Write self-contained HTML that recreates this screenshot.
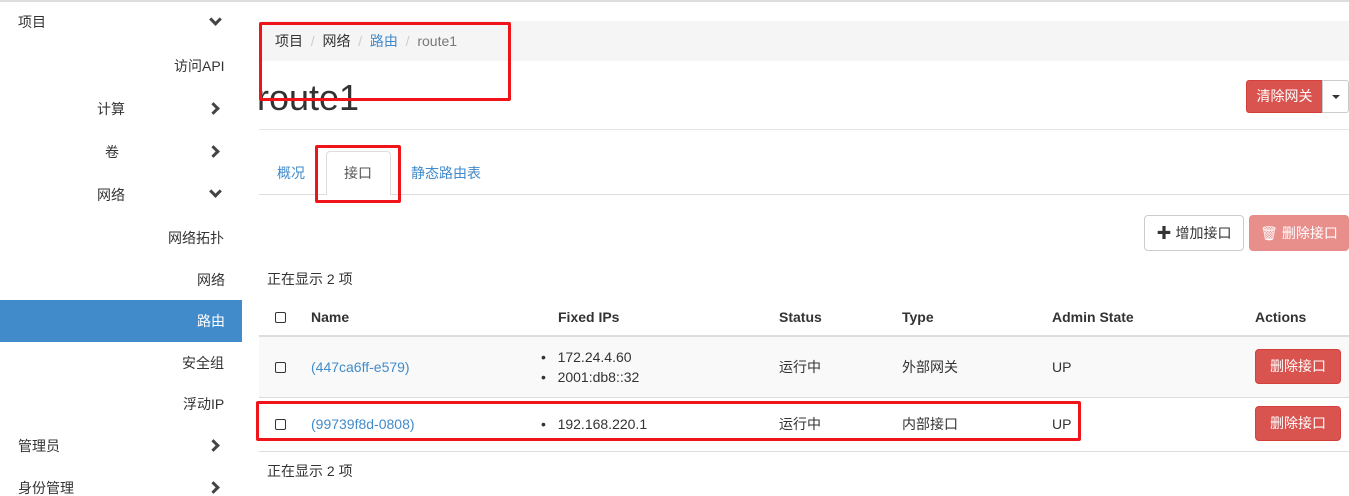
<!DOCTYPE html>
<html><head><meta charset="utf-8"><style>
*{box-sizing:border-box;margin:0;padding:0}
body{width:1349px;height:489px;overflow:hidden;background:#fff;font-family:"Liberation Sans","Noto Sans CJK SC",sans-serif;font-size:14px;color:#333;position:relative}
.a{position:absolute;white-space:nowrap;line-height:16px}
.r{text-align:right}
.lk{color:#428bca}
.chev{position:absolute;width:9px;height:9px;border-right:3px solid #444;border-bottom:3px solid #444}
.down{transform:rotate(45deg)}
.right{transform:rotate(-45deg)}
.cb{position:absolute;width:11px;height:11px;border:1px solid #333;border-radius:2px}
.red{position:absolute;border:2px solid #f0141a;border-radius:2px}
.btnd{position:absolute;background:#d9534f;color:#fff;border:1px solid #d43f3a;border-radius:3px;text-align:center}
</style></head><body>
<div class="a" style="left:0;top:0;width:1349px;height:2px;background:#ddd"></div>
<!-- sidebar -->
<div class="a" style="left:18px;top:14px">项目</div><div class="chev down" style="left:211px;top:15px"></div>
<div class="a" style="left:174px;top:58px">访问API</div>
<div class="a" style="left:97px;top:101px">计算</div><div class="chev right" style="left:209px;top:104px"></div>
<div class="a" style="left:105px;top:144px">卷</div><div class="chev right" style="left:209px;top:147px"></div>
<div class="a" style="left:97px;top:187px">网络</div><div class="chev down" style="left:211px;top:187px"></div>
<div class="a" style="left:168px;top:230px">网络拓扑</div>
<div class="a" style="left:197px;top:272px">网络</div>
<div class="a" style="left:0;top:300px;width:242px;height:42px;background:#428bca"></div>
<div class="a" style="left:197px;top:313px;color:#fff">路由</div>
<div class="a" style="left:182px;top:355px">安全组</div>
<div class="a" style="left:183px;top:396px">浮动IP</div>
<div class="a" style="left:18px;top:438px">管理员</div><div class="chev right" style="left:209px;top:441px"></div>
<div class="a" style="left:18px;top:480px">身份管理</div><div class="chev right" style="left:209px;top:483px"></div>
<!-- breadcrumb -->
<div class="a" style="left:259px;top:21px;width:1090px;height:40px;background:#f5f5f5"></div>
<div class="a" style="left:275px;top:33px">项目 <span style="color:#ccc">&nbsp;/&nbsp;</span> 网络 <span style="color:#ccc">&nbsp;/&nbsp;</span> <span class="lk">路由</span> <span style="color:#ccc">&nbsp;/&nbsp;</span> <span style="color:#777">route1</span></div>
<div class="a" style="left:257px;top:78px;font-size:36px;color:#333;line-height:40px">route1</div>
<div class="btnd" style="left:1246px;top:80px;width:77px;height:33px;line-height:31px;border-radius:3px 0 0 3px">清除网关</div>
<div class="a" style="left:1322px;top:80px;width:27px;height:33px;border:1px solid #ccc;border-radius:0 3px 3px 0"></div>
<div class="a" style="left:1332px;top:95px;border-left:4px solid transparent;border-right:4px solid transparent;border-top:4px solid #333"></div>
<div class="a" style="left:259px;top:129px;width:1090px;height:1px;background:#e5e5e5"></div>
<!-- tabs -->
<div class="a" style="left:259px;top:194px;width:1090px;height:1px;background:#ddd"></div>
<div class="a" style="left:326px;top:151px;width:65px;height:44px;background:#fff;border:1px solid #ddd;border-bottom:none;border-radius:4px 4px 0 0"></div>
<div class="a lk" style="left:277px;top:165px">概况</div>
<div class="a" style="left:344px;top:165px;color:#555">接口</div>
<div class="a lk" style="left:411px;top:165px">静态路由表</div>
<!-- buttons -->
<div class="a" style="left:1144px;top:215px;width:100px;height:36px;border:1px solid #ccc;border-radius:4px;line-height:34px;text-align:center"><b style="font-size:15px">✚</b> 增加接口</div>
<div class="a" style="left:1249px;top:215px;width:100px;height:36px;background:#e88e8b;border-radius:4px;color:#fff;line-height:36px;text-align:center">🗑 删除接口</div>
<div class="a" style="left:267px;top:271px">正在显示 2 项</div>
<!-- table -->
<div class="cb" style="left:275px;top:312px"></div>
<div class="a" style="left:311px;top:309px;font-weight:bold">Name</div>
<div class="a" style="left:558px;top:309px;font-weight:bold">Fixed IPs</div>
<div class="a" style="left:779px;top:309px;font-weight:bold">Status</div>
<div class="a" style="left:902px;top:309px;font-weight:bold">Type</div>
<div class="a" style="left:1052px;top:309px;font-weight:bold">Admin State</div>
<div class="a" style="left:1255px;top:309px;font-weight:bold">Actions</div>
<div class="a" style="left:259px;top:335px;width:1090px;height:2px;background:#ddd"></div>
<div class="a" style="left:259px;top:337px;width:1090px;height:60px;background:#f9f9f9"></div>
<div class="a" style="left:259px;top:397px;width:1090px;height:1px;background:#ddd"></div>
<div class="cb" style="left:275px;top:362px"></div>
<div class="a lk" style="left:311px;top:359px">(447ca6ff-e579)</div>
<div class="a" style="left:541px;top:349px">•&nbsp;&nbsp; 172.24.4.60</div>
<div class="a" style="left:541px;top:369px">•&nbsp;&nbsp; 2001:db8::32</div>
<div class="a" style="left:779px;top:359px">运行中</div>
<div class="a" style="left:902px;top:359px">外部网关</div>
<div class="a" style="left:1052px;top:359px">UP</div>
<div class="btnd" style="left:1255px;top:349px;width:86px;height:35px;line-height:33px;border-radius:4px">删除接口</div>
<div class="cb" style="left:275px;top:419px"></div>
<div class="a lk" style="left:311px;top:416px">(99739f8d-0808)</div>
<div class="a" style="left:541px;top:416px">•&nbsp;&nbsp; 192.168.220.1</div>
<div class="a" style="left:779px;top:416px">运行中</div>
<div class="a" style="left:902px;top:416px">内部接口</div>
<div class="a" style="left:1052px;top:416px">UP</div>
<div class="btnd" style="left:1255px;top:406px;width:86px;height:35px;line-height:33px;border-radius:4px">删除接口</div>
<div class="a" style="left:259px;top:451px;width:1090px;height:1px;background:#ddd"></div>
<div class="a" style="left:267px;top:463px">正在显示 2 项</div>
<!-- red annotation boxes -->
<div class="red" style="left:259px;top:22px;width:252px;height:79px;border-width:3px"></div>
<div class="red" style="left:315px;top:145px;width:86px;height:58px;border-width:3px"></div>
<div class="red" style="left:256px;top:401px;width:825px;height:40px;border-width:3px"></div>
</body></html>
